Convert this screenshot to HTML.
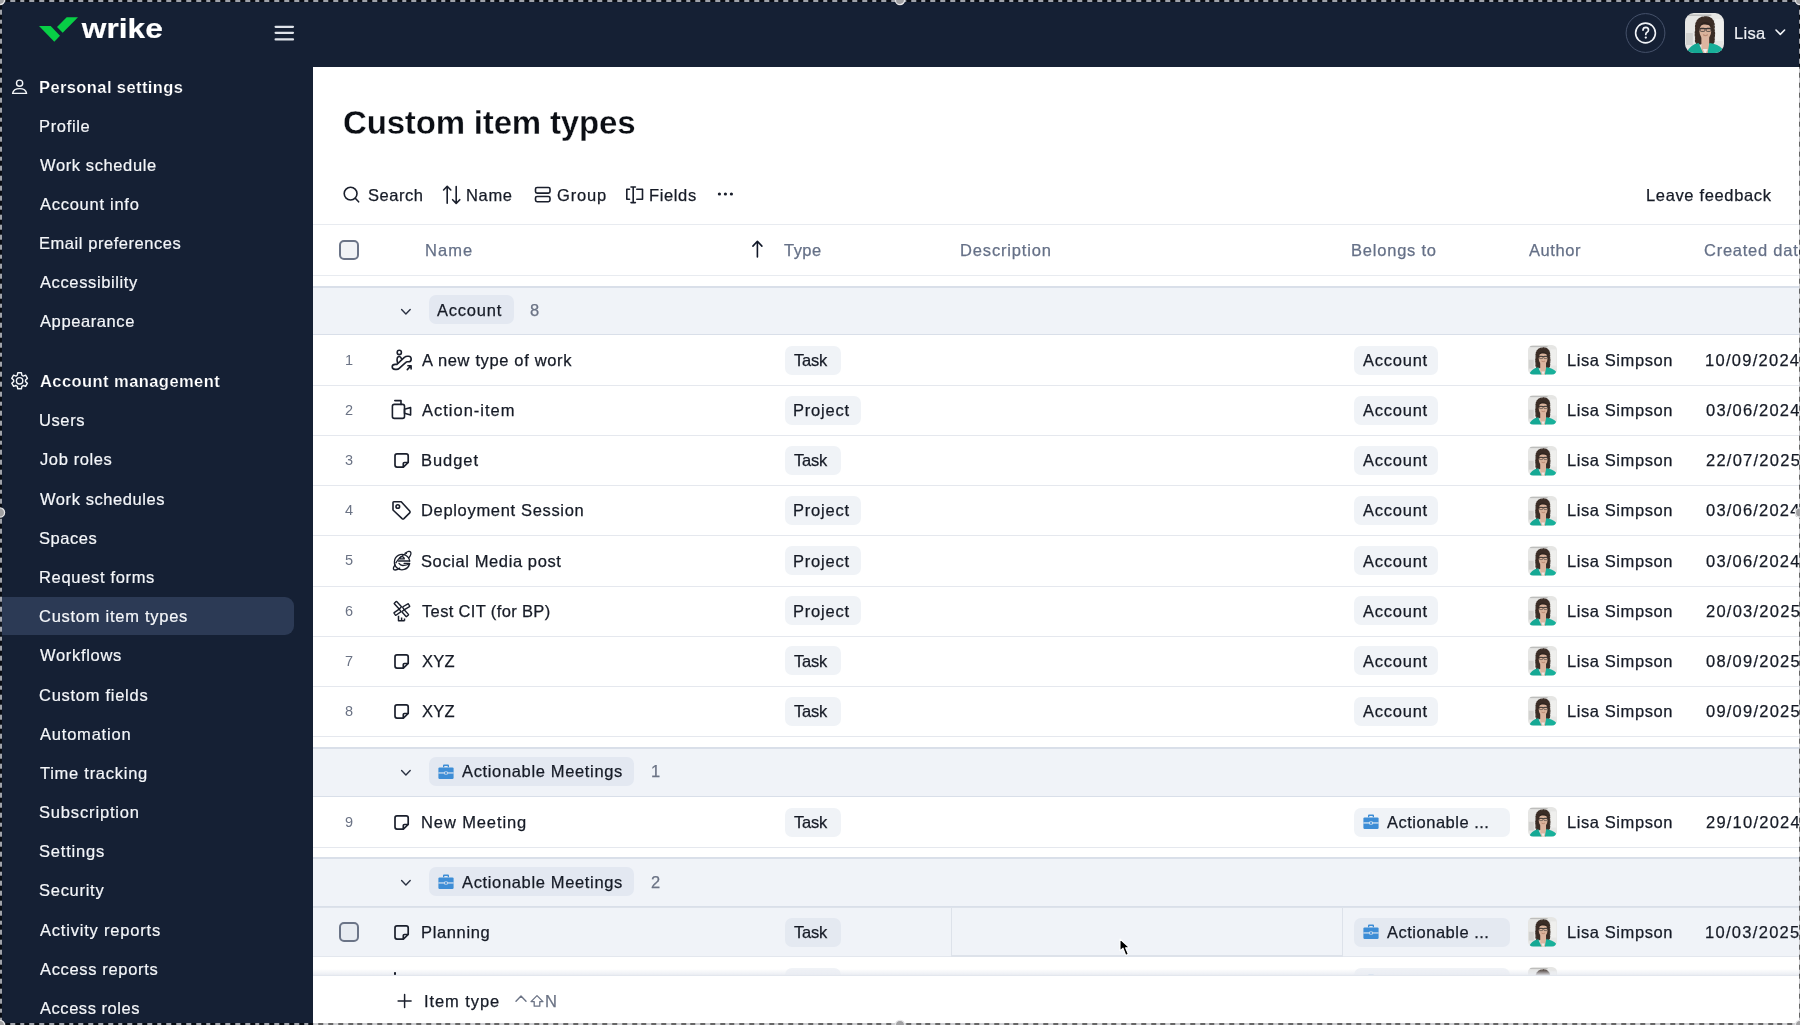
<!DOCTYPE html><html><head><meta charset="utf-8"><title>Custom item types</title><style>
*{box-sizing:border-box;margin:0;padding:0}
html,body{width:1800px;height:1025px;overflow:hidden;background:#152034;font-family:"Liberation Sans",sans-serif;}
.tx,.a{will-change:transform}
.a{position:absolute;white-space:nowrap}
.tx{-webkit-text-stroke:0.25px currentColor}
.sx{-webkit-text-stroke:0.2px currentColor}
.main{position:absolute;left:313px;top:67px;width:1487px;height:958px;background:#fff;overflow:hidden}
.hl{position:absolute;left:0;height:1px;background:#e5e8ee;width:1487px}
.chip{position:absolute;height:29px;border-radius:7px;background:#f0f3f7}
.gchip{position:absolute;height:29px;border-radius:7px;background:#e3e8f1}
.grp{position:absolute;left:0;width:1487px;background:#f0f3f8;border-top:2px solid #d9dfe9;border-bottom:1.5px solid #d9dfe9}
</style></head><body>
<svg class="a" style="left:0;top:0" width="300" height="67" viewBox="0 0 300 67"><polygon points="39,26 50.7,26.1 60,35.7 54.3,41.7" fill="#08cf46"/><polygon points="57,27 66.7,17.2 78,17.2 62.7,32.7" fill="#08cf46"/><g fill="#dfe3ea"><rect x="274.5" y="25.7" width="19.6" height="2.2" rx="1.1"/><rect x="274.5" y="31.7" width="19.6" height="2.2" rx="1.1"/><rect x="274.5" y="38.3" width="19.6" height="2.2" rx="1.1"/></g></svg>
<svg class="a" style="left:0;top:0" width="200" height="60" viewBox="0 0 200 60"><text transform="translate(81.8 38.4) scale(1.218 1.06)" font-family="Liberation Sans" font-weight="bold" font-size="26" fill="#fff" stroke="#fff" stroke-width="0.15">wrike</text></svg>
<svg class="a" style="left:1600px;top:0" width="200" height="67" viewBox="1600 0 200 67"><circle cx="1645.5" cy="33" r="19.4" fill="none" stroke="#46526b" stroke-width="1"/><circle cx="1645.5" cy="33" r="9.9" fill="none" stroke="#f2f4f8" stroke-width="1.6"/><path d="M1643 30.1 Q1643.2 27.4 1645.8 27.4 Q1648.5 27.5 1648.5 29.9 Q1648.5 31.5 1646.8 32.4 Q1645.8 33 1645.8 34.4" fill="none" stroke="#f2f4f8" stroke-width="1.7" stroke-linecap="round"/><circle cx="1645.8" cy="37.6" r="1.15" fill="#f2f4f8"/><path d="M1776 30 L1780.3 34.4 L1784.6 30" fill="none" stroke="#f2f4f8" stroke-width="1.6" stroke-linecap="round" stroke-linejoin="round"/></svg>
<svg class="a" style="left:1685px;top:13px" width="39" height="40" viewBox="0 0 40 40" preserveAspectRatio="none"><defs><clipPath id="chdr"><rect x="0" y="0" width="40" height="40" rx="9"/></clipPath></defs><g clip-path="url(#chdr)"><rect width="40" height="40" fill="#e6e6e4"/><rect x="3" y="1.5" width="24" height="1.4" fill="#8d8d8d" opacity="0.5"/><rect x="1" y="20" width="7" height="12" fill="#d2d2d0"/><rect x="31" y="6" width="8" height="22" fill="#efefed"/><path d="M20.5 4 Q25.6 3.6 28.2 7.2 Q30.4 11 29.6 16 Q30.6 21 29.6 25 Q30.4 29 28 31 L24 30.6 L17 30.6 L12.6 31 Q10.2 29 11.2 25 Q10.2 21 11.2 16.5 Q10.4 11 13 7.4 Q15.6 4.2 20.5 4Z" fill="#3a2c25" stroke="#3a2c25" stroke-width="1.6" stroke-dasharray="1.6 1.4" stroke-linecap="round"/><ellipse cx="20.8" cy="18.2" rx="6" ry="8.2" fill="#dab39c"/><path d="M15 13 Q17 8.5 21.5 9 Q25.5 9.5 27 13 Q23 11 19 11.5 Q16.5 12 15 13Z" fill="#2f241f"/><rect x="16.8" y="24" width="8" height="17" fill="#dcb5a0"/><path d="M15 15.6 H27.4" stroke="#3b3634" stroke-width="1.1"/><rect x="15.6" y="15.2" width="4.8" height="3.2" rx="1" fill="none" stroke="#3b3634" stroke-width="0.8"/><rect x="21.8" y="15.2" width="4.8" height="3.2" rx="1" fill="none" stroke="#3b3634" stroke-width="0.8"/><path d="M18.5 21.8 Q21 23.4 23.5 21.8" fill="none" stroke="#a8705a" stroke-width="0.8"/><path d="M1 41 Q4 32 14 30 L19 41Z" fill="#15a894"/><path d="M25 30 Q34 31 38.5 36 L37.5 41 L23 41Z" fill="#18b09a"/><path d="M18.2 36 L20.8 41 L23.2 36Z" fill="#ececec"/></g></svg>
<div class="a sx" style="left:1733.85px;top:22.90px;font-size:16.5px;line-height:20px;color:#eef0f4;letter-spacing:0.295px;">Lisa</div>
<svg class="a" style="left:0;top:60px" width="40" height="340" viewBox="0 60 40 340"><circle cx="19.6" cy="83.2" r="3.1" fill="none" stroke="#f4f6f9" stroke-width="1.4"/><path d="M12.6 93.4 Q13.5 88.6 19.6 88.6 Q25.7 88.6 26.6 93.4 Z" fill="none" stroke="#f4f6f9" stroke-width="1.4" stroke-linejoin="round"/></svg>
<svg class="a" style="left:0;top:360px" width="40" height="40" viewBox="0 360 40 40"><path d="M17.76 372.81 L21.44 372.81 L21.85 375.24 L23.29 376.07 L25.60 375.21 L27.44 378.40 L25.54 379.96 L25.54 381.64 L27.44 383.20 L25.60 386.39 L23.29 385.53 L21.85 386.36 L21.44 388.79 L17.76 388.79 L17.35 386.36 L15.91 385.53 L13.60 386.39 L11.76 383.20 L13.66 381.64 L13.66 379.96 L11.76 378.40 L13.60 375.21 L15.91 376.07 L17.35 375.24Z" fill="none" stroke="#f4f6f9" stroke-width="1.4" stroke-linejoin="round"/><circle cx="19.6" cy="380.8" r="3.2" fill="none" stroke="#f4f6f9" stroke-width="1.4"/></svg>
<div class="a" style="left:0;top:596.5px;width:294px;height:38px;background:#2c3a55;border-radius:0 9px 9px 0"></div>
<div class="a" style="left:38.50px;top:76.50px;font-size:16.5px;line-height:20px;font-weight:bold;color:#ffffff;letter-spacing:0.396px;-webkit-text-stroke:0.2px #152034">Personal settings</div>
<div class="a sx" style="left:38.75px;top:116.00px;font-size:16.5px;line-height:20px;color:#f4f6f9;letter-spacing:0.670px;">Profile</div>
<div class="a sx" style="left:40.03px;top:155.07px;font-size:16.5px;line-height:20px;color:#f4f6f9;letter-spacing:0.607px;">Work schedule</div>
<div class="a sx" style="left:40.07px;top:194.14px;font-size:16.5px;line-height:20px;color:#f4f6f9;letter-spacing:0.729px;">Account info</div>
<div class="a sx" style="left:38.75px;top:233.21px;font-size:16.5px;line-height:20px;color:#f4f6f9;letter-spacing:0.555px;">Email preferences</div>
<div class="a sx" style="left:40.07px;top:272.28px;font-size:16.5px;line-height:20px;color:#f4f6f9;letter-spacing:0.617px;">Accessibility</div>
<div class="a sx" style="left:40.07px;top:311.35px;font-size:16.5px;line-height:20px;color:#f4f6f9;letter-spacing:0.598px;">Appearance</div>
<div class="a" style="left:39.79px;top:370.50px;font-size:16.5px;line-height:20px;font-weight:bold;color:#ffffff;letter-spacing:0.432px;-webkit-text-stroke:0.2px #152034">Account management</div>
<div class="a sx" style="left:38.83px;top:410.20px;font-size:16.5px;line-height:20px;color:#f4f6f9;letter-spacing:0.596px;">Users</div>
<div class="a sx" style="left:39.84px;top:449.39px;font-size:16.5px;line-height:20px;color:#f4f6f9;letter-spacing:0.613px;">Job roles</div>
<div class="a sx" style="left:40.03px;top:488.58px;font-size:16.5px;line-height:20px;color:#f4f6f9;letter-spacing:0.569px;">Work schedules</div>
<div class="a sx" style="left:39.35px;top:527.77px;font-size:16.5px;line-height:20px;color:#f4f6f9;letter-spacing:0.562px;">Spaces</div>
<div class="a sx" style="left:38.75px;top:566.96px;font-size:16.5px;line-height:20px;color:#f4f6f9;letter-spacing:0.672px;">Request forms</div>
<div class="a sx" style="left:39.26px;top:606.15px;font-size:16.5px;line-height:20px;color:#f4f6f9;letter-spacing:0.732px;">Custom item types</div>
<div class="a sx" style="left:40.03px;top:645.34px;font-size:16.5px;line-height:20px;color:#f4f6f9;letter-spacing:0.685px;">Workflows</div>
<div class="a sx" style="left:39.26px;top:684.53px;font-size:16.5px;line-height:20px;color:#f4f6f9;letter-spacing:0.724px;">Custom fields</div>
<div class="a sx" style="left:40.07px;top:723.72px;font-size:16.5px;line-height:20px;color:#f4f6f9;letter-spacing:0.793px;">Automation</div>
<div class="a sx" style="left:39.73px;top:762.91px;font-size:16.5px;line-height:20px;color:#f4f6f9;letter-spacing:0.734px;">Time tracking</div>
<div class="a sx" style="left:39.35px;top:802.10px;font-size:16.5px;line-height:20px;color:#f4f6f9;letter-spacing:0.838px;">Subscription</div>
<div class="a sx" style="left:39.35px;top:841.29px;font-size:16.5px;line-height:20px;color:#f4f6f9;letter-spacing:0.804px;">Settings</div>
<div class="a sx" style="left:39.35px;top:880.48px;font-size:16.5px;line-height:20px;color:#f4f6f9;letter-spacing:0.725px;">Security</div>
<div class="a sx" style="left:40.07px;top:919.67px;font-size:16.5px;line-height:20px;color:#f4f6f9;letter-spacing:0.802px;">Activity reports</div>
<div class="a sx" style="left:40.07px;top:958.86px;font-size:16.5px;line-height:20px;color:#f4f6f9;letter-spacing:0.655px;">Access reports</div>
<div class="a sx" style="left:40.07px;top:998.05px;font-size:16.5px;line-height:20px;color:#f4f6f9;letter-spacing:0.545px;">Access roles</div>
<div class="main">
<div class="a" style="left:29.85px;top:35.60px;font-size:33px;line-height:40px;font-weight:bold;color:#0b0e14;letter-spacing:-0.170px;-webkit-text-stroke:0.3px #fff">Custom item types</div>
<svg class="a" style="left:22px;top:116px" width="420" height="24" viewBox="335 183 420 24"><g fill="none" stroke="#1a1f2c" stroke-width="1.6" stroke-linecap="round" stroke-linejoin="round"><circle cx="350.6" cy="193.6" r="6.4"/><path d="M355.3 198.3 L358.6 201.8"/><path d="M447.2 203.3 V186.5 M443.6 190 L447.2 186.3 L450.8 190"/><path d="M456.2 186.5 V203.3 M452.6 199.7 L456.2 203.4 L459.8 199.7"/><rect x="535.5" y="187.5" width="14.5" height="5.6" rx="1.6"/><rect x="535.5" y="196.5" width="14.5" height="5.2" rx="1.6"/><path d="M629.5 189.3 H626.8 V199.3 H629.5"/><path d="M636.8 189.3 H642.5 V199.3 H636.8"/><path d="M633.2 187 V202.6 M631 187 H635.4 M631 202.6 H635.4"/></g><g fill="#1a1f2c"><circle cx="719.4" cy="194" r="1.6"/><circle cx="725.4" cy="194" r="1.6"/><circle cx="731.4" cy="194" r="1.6"/></g></svg>
<div class="a tx" style="left:54.55px;top:117.80px;font-size:16.5px;line-height:20px;color:#161b26;letter-spacing:0.528px;">Search</div>
<div class="a tx" style="left:153.45px;top:117.80px;font-size:16.5px;line-height:20px;color:#161b26;letter-spacing:0.658px;">Name</div>
<div class="a tx" style="left:243.57px;top:117.80px;font-size:16.5px;line-height:20px;color:#161b26;letter-spacing:0.816px;">Group</div>
<div class="a tx" style="left:335.95px;top:117.80px;font-size:16.5px;line-height:20px;color:#161b26;letter-spacing:0.627px;">Fields</div>
<div class="a tx" style="left:1332.65px;top:117.80px;font-size:16.5px;line-height:20px;color:#161b26;letter-spacing:0.648px;">Leave feedback</div>
<div class="hl" style="top:157px;background:#e8ebf0"></div>
<div class="hl" style="top:207.5px;background:#e8ebf0"></div>
<div class="a" style="left:26.19999999999999px;top:173px;width:19.5px;height:19.5px;border:2px solid #6b7487;border-radius:5px;background:#f1f3f6"></div>
<div class="a tx" style="left:112.35px;top:172.90px;font-size:16.5px;line-height:20px;color:#657087;letter-spacing:1.024px;">Name</div>
<div class="a tx" style="left:471.03px;top:172.90px;font-size:16.5px;line-height:20px;color:#657087;letter-spacing:0.474px;">Type</div>
<div class="a tx" style="left:646.55px;top:172.90px;font-size:16.5px;line-height:20px;color:#657087;letter-spacing:0.849px;">Description</div>
<div class="a tx" style="left:1037.95px;top:172.90px;font-size:16.5px;line-height:20px;color:#657087;letter-spacing:0.786px;">Belongs to</div>
<div class="a tx" style="left:1216.07px;top:172.90px;font-size:16.5px;line-height:20px;color:#657087;letter-spacing:0.558px;">Author</div>
<div class="a tx" style="left:1391.16px;top:172.90px;font-size:16.5px;line-height:20px;color:#657087;letter-spacing:0.750px;">Created date</div>
<svg class="a" style="left:434px;top:171px" width="20" height="24" viewBox="747 238 20 24"><path d="M757.4 257 V241.5 M752.9 246.1 L757.4 241.3 L761.9 246.1" fill="none" stroke="#0f1627" stroke-width="1.6" stroke-linecap="round" stroke-linejoin="round"/></svg>
<div class="grp" style="top:218.5px;height:49.5px"></div><svg class="a" style="left:86.3px;top:239.6px" width="14" height="10" viewBox="0 0 14 10"><path d="M2.6 2.4 L6.9 6.9 L11.2 2.4" fill="none" stroke="#2a3142" stroke-width="1.4" stroke-linecap="round" stroke-linejoin="round"/></svg><div class="gchip" style="left:116.0px;top:228.0px;width:84.5px"></div><div class="a tx" style="left:123.67px;top:232.80px;font-size:16.5px;line-height:20px;color:#161b26;letter-spacing:0.772px;">Account</div><div class="a tx" style="left:217.08px;top:232.80px;font-size:16.5px;line-height:20px;color:#6b7385;letter-spacing:0.650px;">8</div>
<div class="a" style="left:25.6px;top:282.8px;width:20px;text-align:center;font-size:14.5px;line-height:20px;color:#6b7385">1</div><svg class="a" style="left:72.0px;top:278.0px" width="35" height="30" viewBox="0 0 35 30"><g fill="none" stroke="#1a1f2c" stroke-width="1.6" stroke-linecap="round" stroke-linejoin="round"><circle cx="14.3" cy="7.4" r="2.1"/><path d="M12.6 18.2 Q11.6 14.5 12.3 12.8 Q13.2 11.2 14.6 11.4 Q15.7 11.7 16.6 13.9"/><path d="M10.2 19.4 H11.9 L19.6 12.2 Q20.6 11.2 22.4 11.2 H23.6 Q26.2 11.3 26.2 14.1 Q26.1 16.7 23.6 16.8 H22.3 Q21.4 16.8 20.6 17.6 L14.2 23.4 Q13.2 24.4 11.6 24.4 H10.2 Q7.2 24.3 7.2 21.8 Q7.3 19.5 10.2 19.4Z"/><path d="M22.3 24.6 L26 20.8 M22.9 20.7 H26.1 V23.9"/></g></svg><div class="a tx" style="left:108.87px;top:283.00px;font-size:16.5px;line-height:20px;color:#161b26;letter-spacing:0.642px;">A new type of work</div><div class="chip" style="left:472.0px;top:278.5px;width:56px"></div><div class="a tx" style="left:481.03px;top:283.00px;font-size:16.5px;line-height:20px;color:#161b26;letter-spacing:-0.236px;">Task</div><div class="chip" style="left:1040.5px;top:278.5px;width:84px"></div><div class="a tx" style="left:1049.57px;top:283.00px;font-size:16.5px;line-height:20px;color:#161b26;letter-spacing:0.756px;">Account</div><svg class="a" style="left:1215.1px;top:278.3px" width="29.1" height="29.5" viewBox="0 0 40 40" preserveAspectRatio="none"><defs><clipPath id="cr1"><rect x="0" y="0" width="40" height="40" rx="7"/></clipPath></defs><g clip-path="url(#cr1)"><rect width="40" height="40" fill="#e6e6e4"/><rect x="3" y="1.5" width="24" height="1.4" fill="#8d8d8d" opacity="0.5"/><rect x="1" y="20" width="7" height="12" fill="#d2d2d0"/><rect x="31" y="6" width="8" height="22" fill="#efefed"/><path d="M20.5 4 Q25.6 3.6 28.2 7.2 Q30.4 11 29.6 16 Q30.6 21 29.6 25 Q30.4 29 28 31 L24 30.6 L17 30.6 L12.6 31 Q10.2 29 11.2 25 Q10.2 21 11.2 16.5 Q10.4 11 13 7.4 Q15.6 4.2 20.5 4Z" fill="#3a2c25" stroke="#3a2c25" stroke-width="1.6" stroke-dasharray="1.6 1.4" stroke-linecap="round"/><ellipse cx="20.8" cy="18.2" rx="6" ry="8.2" fill="#dab39c"/><path d="M15 13 Q17 8.5 21.5 9 Q25.5 9.5 27 13 Q23 11 19 11.5 Q16.5 12 15 13Z" fill="#2f241f"/><rect x="16.8" y="24" width="8" height="17" fill="#dcb5a0"/><path d="M15 15.6 H27.4" stroke="#3b3634" stroke-width="1.1"/><rect x="15.6" y="15.2" width="4.8" height="3.2" rx="1" fill="none" stroke="#3b3634" stroke-width="0.8"/><rect x="21.8" y="15.2" width="4.8" height="3.2" rx="1" fill="none" stroke="#3b3634" stroke-width="0.8"/><path d="M18.5 21.8 Q21 23.4 23.5 21.8" fill="none" stroke="#a8705a" stroke-width="0.8"/><path d="M1 41 Q4 32 14 30 L19 41Z" fill="#15a894"/><path d="M25 30 Q34 31 38.5 36 L37.5 41 L23 41Z" fill="#18b09a"/><path d="M18.2 36 L20.8 41 L23.2 36Z" fill="#ececec"/></g></svg><div class="a tx" style="left:1253.95px;top:283.00px;font-size:16.5px;line-height:20px;color:#161b26;letter-spacing:0.580px;">Lisa Simpson</div><div class="a tx" style="left:1392.44px;top:283.00px;font-size:16.5px;line-height:20px;color:#161b26;letter-spacing:1.273px;">10/09/2024</div><div class="hl" style="top:318.0px"></div>
<div class="a" style="left:25.6px;top:332.9px;width:20px;text-align:center;font-size:14.5px;line-height:20px;color:#6b7385">2</div><svg class="a" style="left:72.0px;top:328.1px" width="35" height="30" viewBox="0 0 35 30"><g fill="none" stroke="#1a1f2c" stroke-width="1.6" stroke-linecap="round" stroke-linejoin="round"><rect x="7.4" y="9.4" width="12.1" height="14" rx="1.9"/><path d="M9.8 5.6 H16 V9.4"/><path d="M19.5 14.3 L25.6 12.6 V20.1 L19.5 18.3Z"/></g></svg><div class="a tx" style="left:108.87px;top:333.14px;font-size:16.5px;line-height:20px;color:#161b26;letter-spacing:1.000px;">Action-item</div><div class="chip" style="left:472.0px;top:328.6px;width:76px"></div><div class="a tx" style="left:480.05px;top:333.14px;font-size:16.5px;line-height:20px;color:#161b26;letter-spacing:0.787px;">Project</div><div class="chip" style="left:1040.5px;top:328.6px;width:84px"></div><div class="a tx" style="left:1049.57px;top:333.14px;font-size:16.5px;line-height:20px;color:#161b26;letter-spacing:0.756px;">Account</div><svg class="a" style="left:1215.1px;top:328.44px" width="29.1" height="29.5" viewBox="0 0 40 40" preserveAspectRatio="none"><defs><clipPath id="cr2"><rect x="0" y="0" width="40" height="40" rx="7"/></clipPath></defs><g clip-path="url(#cr2)"><rect width="40" height="40" fill="#e6e6e4"/><rect x="3" y="1.5" width="24" height="1.4" fill="#8d8d8d" opacity="0.5"/><rect x="1" y="20" width="7" height="12" fill="#d2d2d0"/><rect x="31" y="6" width="8" height="22" fill="#efefed"/><path d="M20.5 4 Q25.6 3.6 28.2 7.2 Q30.4 11 29.6 16 Q30.6 21 29.6 25 Q30.4 29 28 31 L24 30.6 L17 30.6 L12.6 31 Q10.2 29 11.2 25 Q10.2 21 11.2 16.5 Q10.4 11 13 7.4 Q15.6 4.2 20.5 4Z" fill="#3a2c25" stroke="#3a2c25" stroke-width="1.6" stroke-dasharray="1.6 1.4" stroke-linecap="round"/><ellipse cx="20.8" cy="18.2" rx="6" ry="8.2" fill="#dab39c"/><path d="M15 13 Q17 8.5 21.5 9 Q25.5 9.5 27 13 Q23 11 19 11.5 Q16.5 12 15 13Z" fill="#2f241f"/><rect x="16.8" y="24" width="8" height="17" fill="#dcb5a0"/><path d="M15 15.6 H27.4" stroke="#3b3634" stroke-width="1.1"/><rect x="15.6" y="15.2" width="4.8" height="3.2" rx="1" fill="none" stroke="#3b3634" stroke-width="0.8"/><rect x="21.8" y="15.2" width="4.8" height="3.2" rx="1" fill="none" stroke="#3b3634" stroke-width="0.8"/><path d="M18.5 21.8 Q21 23.4 23.5 21.8" fill="none" stroke="#a8705a" stroke-width="0.8"/><path d="M1 41 Q4 32 14 30 L19 41Z" fill="#15a894"/><path d="M25 30 Q34 31 38.5 36 L37.5 41 L23 41Z" fill="#18b09a"/><path d="M18.2 36 L20.8 41 L23.2 36Z" fill="#ececec"/></g></svg><div class="a tx" style="left:1253.95px;top:333.14px;font-size:16.5px;line-height:20px;color:#161b26;letter-spacing:0.580px;">Lisa Simpson</div><div class="a tx" style="left:1393.06px;top:333.14px;font-size:16.5px;line-height:20px;color:#161b26;letter-spacing:1.205px;">03/06/2024</div><div class="hl" style="top:368.1px"></div>
<div class="a" style="left:25.6px;top:383.1px;width:20px;text-align:center;font-size:14.5px;line-height:20px;color:#6b7385">3</div><svg class="a" style="left:72.0px;top:378.3px" width="35" height="30" viewBox="0 0 35 30"><g fill="none" stroke="#1a1f2c" stroke-width="1.6" stroke-linecap="round" stroke-linejoin="round"><path d="M12 8.9 H21.2 Q23.2 8.9 23.2 10.9 V17.5 L18.4 22.1 H12 Q10 22.1 10 20.1 V10.9 Q10 8.9 12 8.9Z M23.2 17.5 H19.4 Q18.3 17.5 18.3 18.6 V22.1" stroke-width="1.7"/></g></svg><div class="a tx" style="left:107.55px;top:383.28px;font-size:16.5px;line-height:20px;color:#161b26;letter-spacing:0.936px;">Budget</div><div class="chip" style="left:472.0px;top:378.8px;width:56px"></div><div class="a tx" style="left:481.03px;top:383.28px;font-size:16.5px;line-height:20px;color:#161b26;letter-spacing:-0.236px;">Task</div><div class="chip" style="left:1040.5px;top:378.8px;width:84px"></div><div class="a tx" style="left:1049.57px;top:383.28px;font-size:16.5px;line-height:20px;color:#161b26;letter-spacing:0.756px;">Account</div><svg class="a" style="left:1215.1px;top:378.58px" width="29.1" height="29.5" viewBox="0 0 40 40" preserveAspectRatio="none"><defs><clipPath id="cr3"><rect x="0" y="0" width="40" height="40" rx="7"/></clipPath></defs><g clip-path="url(#cr3)"><rect width="40" height="40" fill="#e6e6e4"/><rect x="3" y="1.5" width="24" height="1.4" fill="#8d8d8d" opacity="0.5"/><rect x="1" y="20" width="7" height="12" fill="#d2d2d0"/><rect x="31" y="6" width="8" height="22" fill="#efefed"/><path d="M20.5 4 Q25.6 3.6 28.2 7.2 Q30.4 11 29.6 16 Q30.6 21 29.6 25 Q30.4 29 28 31 L24 30.6 L17 30.6 L12.6 31 Q10.2 29 11.2 25 Q10.2 21 11.2 16.5 Q10.4 11 13 7.4 Q15.6 4.2 20.5 4Z" fill="#3a2c25" stroke="#3a2c25" stroke-width="1.6" stroke-dasharray="1.6 1.4" stroke-linecap="round"/><ellipse cx="20.8" cy="18.2" rx="6" ry="8.2" fill="#dab39c"/><path d="M15 13 Q17 8.5 21.5 9 Q25.5 9.5 27 13 Q23 11 19 11.5 Q16.5 12 15 13Z" fill="#2f241f"/><rect x="16.8" y="24" width="8" height="17" fill="#dcb5a0"/><path d="M15 15.6 H27.4" stroke="#3b3634" stroke-width="1.1"/><rect x="15.6" y="15.2" width="4.8" height="3.2" rx="1" fill="none" stroke="#3b3634" stroke-width="0.8"/><rect x="21.8" y="15.2" width="4.8" height="3.2" rx="1" fill="none" stroke="#3b3634" stroke-width="0.8"/><path d="M18.5 21.8 Q21 23.4 23.5 21.8" fill="none" stroke="#a8705a" stroke-width="0.8"/><path d="M1 41 Q4 32 14 30 L19 41Z" fill="#15a894"/><path d="M25 30 Q34 31 38.5 36 L37.5 41 L23 41Z" fill="#18b09a"/><path d="M18.2 36 L20.8 41 L23.2 36Z" fill="#ececec"/></g></svg><div class="a tx" style="left:1253.95px;top:383.28px;font-size:16.5px;line-height:20px;color:#161b26;letter-spacing:0.580px;">Lisa Simpson</div><div class="a tx" style="left:1392.87px;top:383.28px;font-size:16.5px;line-height:20px;color:#161b26;letter-spacing:1.249px;">22/07/2025</div><div class="hl" style="top:418.3px"></div>
<div class="a" style="left:25.6px;top:433.2px;width:20px;text-align:center;font-size:14.5px;line-height:20px;color:#6b7385">4</div><svg class="a" style="left:72.0px;top:428.4px" width="35" height="30" viewBox="0 0 35 30"><g fill="none" stroke="#1a1f2c" stroke-width="1.6" stroke-linecap="round" stroke-linejoin="round"><path d="M8 7.6 Q8 6.8 8.8 6.8 H16.2 L24.7 16 Q25.6 17 24.7 17.9 L18.9 23.6 Q18 24.4 17.1 23.6 L8 15 Z"/><circle cx="12.8" cy="11.5" r="1.8"/></g></svg><div class="a tx" style="left:107.55px;top:433.42px;font-size:16.5px;line-height:20px;color:#161b26;letter-spacing:0.670px;">Deployment Session</div><div class="chip" style="left:472.0px;top:428.9px;width:76px"></div><div class="a tx" style="left:480.05px;top:433.42px;font-size:16.5px;line-height:20px;color:#161b26;letter-spacing:0.787px;">Project</div><div class="chip" style="left:1040.5px;top:428.9px;width:84px"></div><div class="a tx" style="left:1049.57px;top:433.42px;font-size:16.5px;line-height:20px;color:#161b26;letter-spacing:0.756px;">Account</div><svg class="a" style="left:1215.1px;top:428.71999999999997px" width="29.1" height="29.5" viewBox="0 0 40 40" preserveAspectRatio="none"><defs><clipPath id="cr4"><rect x="0" y="0" width="40" height="40" rx="7"/></clipPath></defs><g clip-path="url(#cr4)"><rect width="40" height="40" fill="#e6e6e4"/><rect x="3" y="1.5" width="24" height="1.4" fill="#8d8d8d" opacity="0.5"/><rect x="1" y="20" width="7" height="12" fill="#d2d2d0"/><rect x="31" y="6" width="8" height="22" fill="#efefed"/><path d="M20.5 4 Q25.6 3.6 28.2 7.2 Q30.4 11 29.6 16 Q30.6 21 29.6 25 Q30.4 29 28 31 L24 30.6 L17 30.6 L12.6 31 Q10.2 29 11.2 25 Q10.2 21 11.2 16.5 Q10.4 11 13 7.4 Q15.6 4.2 20.5 4Z" fill="#3a2c25" stroke="#3a2c25" stroke-width="1.6" stroke-dasharray="1.6 1.4" stroke-linecap="round"/><ellipse cx="20.8" cy="18.2" rx="6" ry="8.2" fill="#dab39c"/><path d="M15 13 Q17 8.5 21.5 9 Q25.5 9.5 27 13 Q23 11 19 11.5 Q16.5 12 15 13Z" fill="#2f241f"/><rect x="16.8" y="24" width="8" height="17" fill="#dcb5a0"/><path d="M15 15.6 H27.4" stroke="#3b3634" stroke-width="1.1"/><rect x="15.6" y="15.2" width="4.8" height="3.2" rx="1" fill="none" stroke="#3b3634" stroke-width="0.8"/><rect x="21.8" y="15.2" width="4.8" height="3.2" rx="1" fill="none" stroke="#3b3634" stroke-width="0.8"/><path d="M18.5 21.8 Q21 23.4 23.5 21.8" fill="none" stroke="#a8705a" stroke-width="0.8"/><path d="M1 41 Q4 32 14 30 L19 41Z" fill="#15a894"/><path d="M25 30 Q34 31 38.5 36 L37.5 41 L23 41Z" fill="#18b09a"/><path d="M18.2 36 L20.8 41 L23.2 36Z" fill="#ececec"/></g></svg><div class="a tx" style="left:1253.95px;top:433.42px;font-size:16.5px;line-height:20px;color:#161b26;letter-spacing:0.580px;">Lisa Simpson</div><div class="a tx" style="left:1393.06px;top:433.42px;font-size:16.5px;line-height:20px;color:#161b26;letter-spacing:1.205px;">03/06/2024</div><div class="hl" style="top:468.4px"></div>
<div class="a" style="left:25.6px;top:483.4px;width:20px;text-align:center;font-size:14.5px;line-height:20px;color:#6b7385">5</div><svg class="a" style="left:72.0px;top:478.6px" width="35" height="30" viewBox="0 0 35 30"><g fill="none" stroke="#1a1f2c" stroke-width="1.6" stroke-linecap="round" stroke-linejoin="round"><g stroke-width="1.35" transform="translate(16.7 15) scale(0.96) translate(-16.7 -15.6)"><path d="M25 15.6 A8 8 0 1 0 24.7 19.2"/><path d="M13.4 15.6 H25 M19.2 18.1 H25"/><path d="M14.6 13.4 Q15 11 17 11 Q19 11 19.4 13.4 Z"/><path d="M13.9 18.1 Q15.4 20.4 18 20.3 Q21.6 20.1 24.9 18.7"/><path d="M20.2 7.6 Q24.8 4.2 26 6.4 Q27.2 8.6 24.2 12.2 M9.8 19.6 Q7 23.6 8.6 24.6 Q10.4 25.8 14.6 23" /><path d="M10.6 17.6 Q14.6 10.6 21.6 7.8"/></g></g></svg><div class="a tx" style="left:108.15px;top:483.56px;font-size:16.5px;line-height:20px;color:#161b26;letter-spacing:0.602px;">Social Media post</div><div class="chip" style="left:472.0px;top:479.1px;width:76px"></div><div class="a tx" style="left:480.05px;top:483.56px;font-size:16.5px;line-height:20px;color:#161b26;letter-spacing:0.787px;">Project</div><div class="chip" style="left:1040.5px;top:479.1px;width:84px"></div><div class="a tx" style="left:1049.57px;top:483.56px;font-size:16.5px;line-height:20px;color:#161b26;letter-spacing:0.756px;">Account</div><svg class="a" style="left:1215.1px;top:478.8599999999999px" width="29.1" height="29.5" viewBox="0 0 40 40" preserveAspectRatio="none"><defs><clipPath id="cr5"><rect x="0" y="0" width="40" height="40" rx="7"/></clipPath></defs><g clip-path="url(#cr5)"><rect width="40" height="40" fill="#e6e6e4"/><rect x="3" y="1.5" width="24" height="1.4" fill="#8d8d8d" opacity="0.5"/><rect x="1" y="20" width="7" height="12" fill="#d2d2d0"/><rect x="31" y="6" width="8" height="22" fill="#efefed"/><path d="M20.5 4 Q25.6 3.6 28.2 7.2 Q30.4 11 29.6 16 Q30.6 21 29.6 25 Q30.4 29 28 31 L24 30.6 L17 30.6 L12.6 31 Q10.2 29 11.2 25 Q10.2 21 11.2 16.5 Q10.4 11 13 7.4 Q15.6 4.2 20.5 4Z" fill="#3a2c25" stroke="#3a2c25" stroke-width="1.6" stroke-dasharray="1.6 1.4" stroke-linecap="round"/><ellipse cx="20.8" cy="18.2" rx="6" ry="8.2" fill="#dab39c"/><path d="M15 13 Q17 8.5 21.5 9 Q25.5 9.5 27 13 Q23 11 19 11.5 Q16.5 12 15 13Z" fill="#2f241f"/><rect x="16.8" y="24" width="8" height="17" fill="#dcb5a0"/><path d="M15 15.6 H27.4" stroke="#3b3634" stroke-width="1.1"/><rect x="15.6" y="15.2" width="4.8" height="3.2" rx="1" fill="none" stroke="#3b3634" stroke-width="0.8"/><rect x="21.8" y="15.2" width="4.8" height="3.2" rx="1" fill="none" stroke="#3b3634" stroke-width="0.8"/><path d="M18.5 21.8 Q21 23.4 23.5 21.8" fill="none" stroke="#a8705a" stroke-width="0.8"/><path d="M1 41 Q4 32 14 30 L19 41Z" fill="#15a894"/><path d="M25 30 Q34 31 38.5 36 L37.5 41 L23 41Z" fill="#18b09a"/><path d="M18.2 36 L20.8 41 L23.2 36Z" fill="#ececec"/></g></svg><div class="a tx" style="left:1253.95px;top:483.56px;font-size:16.5px;line-height:20px;color:#161b26;letter-spacing:0.580px;">Lisa Simpson</div><div class="a tx" style="left:1393.06px;top:483.56px;font-size:16.5px;line-height:20px;color:#161b26;letter-spacing:1.205px;">03/06/2024</div><div class="hl" style="top:518.6px"></div>
<div class="a" style="left:25.6px;top:533.5px;width:20px;text-align:center;font-size:14.5px;line-height:20px;color:#6b7385">6</div><svg class="a" style="left:72.0px;top:528.7px" width="35" height="30" viewBox="0 0 35 30"><g fill="none" stroke="#1a1f2c" stroke-width="1.4" stroke-linejoin="round"><g transform="translate(16.7 13.3) rotate(-133)"><rect x="1.9" y="-1.6" width="7.6" height="3.2" rx="0.4"/></g><g transform="translate(16.7 13.3) rotate(-30)"><rect x="1.9" y="-1.6" width="6.6" height="3.2" rx="0.4"/></g><g transform="translate(16.7 13.3) rotate(145)"><rect x="1.9" y="-1.6" width="6.6" height="3.2" rx="0.4"/></g><g transform="translate(16.7 13.3) rotate(48)"><rect x="1.9" y="-1.6" width="6.8" height="3.2" rx="0.4"/></g><path d="M13.5 19.7 V24.8 H19.6 M16.6 21.6 V24.8 M19.5 22.6 V24.8" stroke-linecap="butt" stroke-width="1.5"/></g></svg><div class="a tx" style="left:108.53px;top:533.70px;font-size:16.5px;line-height:20px;color:#161b26;letter-spacing:0.351px;">Test CIT (for BP)</div><div class="chip" style="left:472.0px;top:529.2px;width:76px"></div><div class="a tx" style="left:480.05px;top:533.70px;font-size:16.5px;line-height:20px;color:#161b26;letter-spacing:0.787px;">Project</div><div class="chip" style="left:1040.5px;top:529.2px;width:84px"></div><div class="a tx" style="left:1049.57px;top:533.70px;font-size:16.5px;line-height:20px;color:#161b26;letter-spacing:0.756px;">Account</div><svg class="a" style="left:1215.1px;top:528.9999999999999px" width="29.1" height="29.5" viewBox="0 0 40 40" preserveAspectRatio="none"><defs><clipPath id="cr6"><rect x="0" y="0" width="40" height="40" rx="7"/></clipPath></defs><g clip-path="url(#cr6)"><rect width="40" height="40" fill="#e6e6e4"/><rect x="3" y="1.5" width="24" height="1.4" fill="#8d8d8d" opacity="0.5"/><rect x="1" y="20" width="7" height="12" fill="#d2d2d0"/><rect x="31" y="6" width="8" height="22" fill="#efefed"/><path d="M20.5 4 Q25.6 3.6 28.2 7.2 Q30.4 11 29.6 16 Q30.6 21 29.6 25 Q30.4 29 28 31 L24 30.6 L17 30.6 L12.6 31 Q10.2 29 11.2 25 Q10.2 21 11.2 16.5 Q10.4 11 13 7.4 Q15.6 4.2 20.5 4Z" fill="#3a2c25" stroke="#3a2c25" stroke-width="1.6" stroke-dasharray="1.6 1.4" stroke-linecap="round"/><ellipse cx="20.8" cy="18.2" rx="6" ry="8.2" fill="#dab39c"/><path d="M15 13 Q17 8.5 21.5 9 Q25.5 9.5 27 13 Q23 11 19 11.5 Q16.5 12 15 13Z" fill="#2f241f"/><rect x="16.8" y="24" width="8" height="17" fill="#dcb5a0"/><path d="M15 15.6 H27.4" stroke="#3b3634" stroke-width="1.1"/><rect x="15.6" y="15.2" width="4.8" height="3.2" rx="1" fill="none" stroke="#3b3634" stroke-width="0.8"/><rect x="21.8" y="15.2" width="4.8" height="3.2" rx="1" fill="none" stroke="#3b3634" stroke-width="0.8"/><path d="M18.5 21.8 Q21 23.4 23.5 21.8" fill="none" stroke="#a8705a" stroke-width="0.8"/><path d="M1 41 Q4 32 14 30 L19 41Z" fill="#15a894"/><path d="M25 30 Q34 31 38.5 36 L37.5 41 L23 41Z" fill="#18b09a"/><path d="M18.2 36 L20.8 41 L23.2 36Z" fill="#ececec"/></g></svg><div class="a tx" style="left:1253.95px;top:533.70px;font-size:16.5px;line-height:20px;color:#161b26;letter-spacing:0.580px;">Lisa Simpson</div><div class="a tx" style="left:1392.87px;top:533.70px;font-size:16.5px;line-height:20px;color:#161b26;letter-spacing:1.249px;">20/03/2025</div><div class="hl" style="top:568.7px"></div>
<div class="a" style="left:25.6px;top:583.6px;width:20px;text-align:center;font-size:14.5px;line-height:20px;color:#6b7385">7</div><svg class="a" style="left:72.0px;top:578.8px" width="35" height="30" viewBox="0 0 35 30"><g fill="none" stroke="#1a1f2c" stroke-width="1.6" stroke-linecap="round" stroke-linejoin="round"><path d="M12 8.9 H21.2 Q23.2 8.9 23.2 10.9 V17.5 L18.4 22.1 H12 Q10 22.1 10 20.1 V10.9 Q10 8.9 12 8.9Z M23.2 17.5 H19.4 Q18.3 17.5 18.3 18.6 V22.1" stroke-width="1.7"/></g></svg><div class="a tx" style="left:108.53px;top:583.84px;font-size:16.5px;line-height:20px;color:#161b26;letter-spacing:0.248px;">XYZ</div><div class="chip" style="left:472.0px;top:579.3px;width:56px"></div><div class="a tx" style="left:481.03px;top:583.84px;font-size:16.5px;line-height:20px;color:#161b26;letter-spacing:-0.236px;">Task</div><div class="chip" style="left:1040.5px;top:579.3px;width:84px"></div><div class="a tx" style="left:1049.57px;top:583.84px;font-size:16.5px;line-height:20px;color:#161b26;letter-spacing:0.756px;">Account</div><svg class="a" style="left:1215.1px;top:579.1399999999999px" width="29.1" height="29.5" viewBox="0 0 40 40" preserveAspectRatio="none"><defs><clipPath id="cr7"><rect x="0" y="0" width="40" height="40" rx="7"/></clipPath></defs><g clip-path="url(#cr7)"><rect width="40" height="40" fill="#e6e6e4"/><rect x="3" y="1.5" width="24" height="1.4" fill="#8d8d8d" opacity="0.5"/><rect x="1" y="20" width="7" height="12" fill="#d2d2d0"/><rect x="31" y="6" width="8" height="22" fill="#efefed"/><path d="M20.5 4 Q25.6 3.6 28.2 7.2 Q30.4 11 29.6 16 Q30.6 21 29.6 25 Q30.4 29 28 31 L24 30.6 L17 30.6 L12.6 31 Q10.2 29 11.2 25 Q10.2 21 11.2 16.5 Q10.4 11 13 7.4 Q15.6 4.2 20.5 4Z" fill="#3a2c25" stroke="#3a2c25" stroke-width="1.6" stroke-dasharray="1.6 1.4" stroke-linecap="round"/><ellipse cx="20.8" cy="18.2" rx="6" ry="8.2" fill="#dab39c"/><path d="M15 13 Q17 8.5 21.5 9 Q25.5 9.5 27 13 Q23 11 19 11.5 Q16.5 12 15 13Z" fill="#2f241f"/><rect x="16.8" y="24" width="8" height="17" fill="#dcb5a0"/><path d="M15 15.6 H27.4" stroke="#3b3634" stroke-width="1.1"/><rect x="15.6" y="15.2" width="4.8" height="3.2" rx="1" fill="none" stroke="#3b3634" stroke-width="0.8"/><rect x="21.8" y="15.2" width="4.8" height="3.2" rx="1" fill="none" stroke="#3b3634" stroke-width="0.8"/><path d="M18.5 21.8 Q21 23.4 23.5 21.8" fill="none" stroke="#a8705a" stroke-width="0.8"/><path d="M1 41 Q4 32 14 30 L19 41Z" fill="#15a894"/><path d="M25 30 Q34 31 38.5 36 L37.5 41 L23 41Z" fill="#18b09a"/><path d="M18.2 36 L20.8 41 L23.2 36Z" fill="#ececec"/></g></svg><div class="a tx" style="left:1253.95px;top:583.84px;font-size:16.5px;line-height:20px;color:#161b26;letter-spacing:0.580px;">Lisa Simpson</div><div class="a tx" style="left:1393.06px;top:583.84px;font-size:16.5px;line-height:20px;color:#161b26;letter-spacing:1.229px;">08/09/2025</div><div class="hl" style="top:618.8px"></div>
<div class="a" style="left:25.6px;top:633.8px;width:20px;text-align:center;font-size:14.5px;line-height:20px;color:#6b7385">8</div><svg class="a" style="left:72.0px;top:629.0px" width="35" height="30" viewBox="0 0 35 30"><g fill="none" stroke="#1a1f2c" stroke-width="1.6" stroke-linecap="round" stroke-linejoin="round"><path d="M12 8.9 H21.2 Q23.2 8.9 23.2 10.9 V17.5 L18.4 22.1 H12 Q10 22.1 10 20.1 V10.9 Q10 8.9 12 8.9Z M23.2 17.5 H19.4 Q18.3 17.5 18.3 18.6 V22.1" stroke-width="1.7"/></g></svg><div class="a tx" style="left:108.53px;top:633.98px;font-size:16.5px;line-height:20px;color:#161b26;letter-spacing:0.248px;">XYZ</div><div class="chip" style="left:472.0px;top:629.5px;width:56px"></div><div class="a tx" style="left:481.03px;top:633.98px;font-size:16.5px;line-height:20px;color:#161b26;letter-spacing:-0.236px;">Task</div><div class="chip" style="left:1040.5px;top:629.5px;width:84px"></div><div class="a tx" style="left:1049.57px;top:633.98px;font-size:16.5px;line-height:20px;color:#161b26;letter-spacing:0.756px;">Account</div><svg class="a" style="left:1215.1px;top:629.2799999999999px" width="29.1" height="29.5" viewBox="0 0 40 40" preserveAspectRatio="none"><defs><clipPath id="cr8"><rect x="0" y="0" width="40" height="40" rx="7"/></clipPath></defs><g clip-path="url(#cr8)"><rect width="40" height="40" fill="#e6e6e4"/><rect x="3" y="1.5" width="24" height="1.4" fill="#8d8d8d" opacity="0.5"/><rect x="1" y="20" width="7" height="12" fill="#d2d2d0"/><rect x="31" y="6" width="8" height="22" fill="#efefed"/><path d="M20.5 4 Q25.6 3.6 28.2 7.2 Q30.4 11 29.6 16 Q30.6 21 29.6 25 Q30.4 29 28 31 L24 30.6 L17 30.6 L12.6 31 Q10.2 29 11.2 25 Q10.2 21 11.2 16.5 Q10.4 11 13 7.4 Q15.6 4.2 20.5 4Z" fill="#3a2c25" stroke="#3a2c25" stroke-width="1.6" stroke-dasharray="1.6 1.4" stroke-linecap="round"/><ellipse cx="20.8" cy="18.2" rx="6" ry="8.2" fill="#dab39c"/><path d="M15 13 Q17 8.5 21.5 9 Q25.5 9.5 27 13 Q23 11 19 11.5 Q16.5 12 15 13Z" fill="#2f241f"/><rect x="16.8" y="24" width="8" height="17" fill="#dcb5a0"/><path d="M15 15.6 H27.4" stroke="#3b3634" stroke-width="1.1"/><rect x="15.6" y="15.2" width="4.8" height="3.2" rx="1" fill="none" stroke="#3b3634" stroke-width="0.8"/><rect x="21.8" y="15.2" width="4.8" height="3.2" rx="1" fill="none" stroke="#3b3634" stroke-width="0.8"/><path d="M18.5 21.8 Q21 23.4 23.5 21.8" fill="none" stroke="#a8705a" stroke-width="0.8"/><path d="M1 41 Q4 32 14 30 L19 41Z" fill="#15a894"/><path d="M25 30 Q34 31 38.5 36 L37.5 41 L23 41Z" fill="#18b09a"/><path d="M18.2 36 L20.8 41 L23.2 36Z" fill="#ececec"/></g></svg><div class="a tx" style="left:1253.95px;top:633.98px;font-size:16.5px;line-height:20px;color:#161b26;letter-spacing:0.580px;">Lisa Simpson</div><div class="a tx" style="left:1393.06px;top:633.98px;font-size:16.5px;line-height:20px;color:#161b26;letter-spacing:1.229px;">09/09/2025</div><div class="hl" style="top:669.0px"></div>
<div class="grp" style="top:680.0px;height:49.5px"></div><svg class="a" style="left:86.3px;top:701.1px" width="14" height="10" viewBox="0 0 14 10"><path d="M2.6 2.4 L6.9 6.9 L11.2 2.4" fill="none" stroke="#2a3142" stroke-width="1.4" stroke-linecap="round" stroke-linejoin="round"/></svg><div class="gchip" style="left:116.0px;top:689.5px;width:205.0px"></div><svg class="a" style="left:125.0px;top:697.0px" width="16" height="16" viewBox="0 0 16 16"><path d="M5 3.2 V1.6 Q5 0.6 6 0.6 H10 Q11 0.6 11 1.6 V3.2 H9.7 V1.9 H6.3 V3.2Z" fill="#3d8dd6"/><rect x="0.4" y="3.4" width="15.2" height="11.6" rx="1.2" fill="#3d8dd6"/><rect x="0.4" y="8.4" width="15.2" height="1.1" fill="#e3e8f1"/><rect x="6.4" y="7.4" width="3.2" height="3.2" rx="0.5" fill="#e3e8f1"/><rect x="7.1" y="8.1" width="1.8" height="1.8" fill="#3d8dd6"/></svg><div class="a tx" style="left:148.57px;top:694.30px;font-size:16.5px;line-height:20px;color:#161b26;letter-spacing:0.652px;">Actionable Meetings</div><div class="a tx" style="left:338.14px;top:694.30px;font-size:16.5px;line-height:20px;color:#6b7385;letter-spacing:0.650px;">1</div>
<div class="a" style="left:25.6px;top:744.8px;width:20px;text-align:center;font-size:14.5px;line-height:20px;color:#6b7385">9</div><svg class="a" style="left:72.0px;top:740.0px" width="35" height="30" viewBox="0 0 35 30"><g fill="none" stroke="#1a1f2c" stroke-width="1.6" stroke-linecap="round" stroke-linejoin="round"><path d="M12 8.9 H21.2 Q23.2 8.9 23.2 10.9 V17.5 L18.4 22.1 H12 Q10 22.1 10 20.1 V10.9 Q10 8.9 12 8.9Z M23.2 17.5 H19.4 Q18.3 17.5 18.3 18.6 V22.1" stroke-width="1.7"/></g></svg><div class="a tx" style="left:107.55px;top:745.00px;font-size:16.5px;line-height:20px;color:#161b26;letter-spacing:0.892px;">New Meeting</div><div class="chip" style="left:472.0px;top:740.5px;width:56px"></div><div class="a tx" style="left:481.03px;top:745.00px;font-size:16.5px;line-height:20px;color:#161b26;letter-spacing:-0.236px;">Task</div><div class="chip" style="left:1041.0px;top:740.5px;width:156px"></div><svg class="a" style="left:1050.0px;top:747.0px" width="16" height="16" viewBox="0 0 16 16"><path d="M5 3.2 V1.6 Q5 0.6 6 0.6 H10 Q11 0.6 11 1.6 V3.2 H9.7 V1.9 H6.3 V3.2Z" fill="#3d8dd6"/><rect x="0.4" y="3.4" width="15.2" height="11.6" rx="1.2" fill="#3d8dd6"/><rect x="0.4" y="8.4" width="15.2" height="1.1" fill="#f0f3f7"/><rect x="6.4" y="7.4" width="3.2" height="3.2" rx="0.5" fill="#f0f3f7"/><rect x="7.1" y="8.1" width="1.8" height="1.8" fill="#3d8dd6"/></svg><div class="a tx" style="left:1073.67px;top:745.00px;font-size:16.5px;line-height:20px;color:#161b26;letter-spacing:0.504px;">Actionable ...</div><svg class="a" style="left:1215.1px;top:740.3px" width="29.1" height="29.5" viewBox="0 0 40 40" preserveAspectRatio="none"><defs><clipPath id="cr9"><rect x="0" y="0" width="40" height="40" rx="7"/></clipPath></defs><g clip-path="url(#cr9)"><rect width="40" height="40" fill="#e6e6e4"/><rect x="3" y="1.5" width="24" height="1.4" fill="#8d8d8d" opacity="0.5"/><rect x="1" y="20" width="7" height="12" fill="#d2d2d0"/><rect x="31" y="6" width="8" height="22" fill="#efefed"/><path d="M20.5 4 Q25.6 3.6 28.2 7.2 Q30.4 11 29.6 16 Q30.6 21 29.6 25 Q30.4 29 28 31 L24 30.6 L17 30.6 L12.6 31 Q10.2 29 11.2 25 Q10.2 21 11.2 16.5 Q10.4 11 13 7.4 Q15.6 4.2 20.5 4Z" fill="#3a2c25" stroke="#3a2c25" stroke-width="1.6" stroke-dasharray="1.6 1.4" stroke-linecap="round"/><ellipse cx="20.8" cy="18.2" rx="6" ry="8.2" fill="#dab39c"/><path d="M15 13 Q17 8.5 21.5 9 Q25.5 9.5 27 13 Q23 11 19 11.5 Q16.5 12 15 13Z" fill="#2f241f"/><rect x="16.8" y="24" width="8" height="17" fill="#dcb5a0"/><path d="M15 15.6 H27.4" stroke="#3b3634" stroke-width="1.1"/><rect x="15.6" y="15.2" width="4.8" height="3.2" rx="1" fill="none" stroke="#3b3634" stroke-width="0.8"/><rect x="21.8" y="15.2" width="4.8" height="3.2" rx="1" fill="none" stroke="#3b3634" stroke-width="0.8"/><path d="M18.5 21.8 Q21 23.4 23.5 21.8" fill="none" stroke="#a8705a" stroke-width="0.8"/><path d="M1 41 Q4 32 14 30 L19 41Z" fill="#15a894"/><path d="M25 30 Q34 31 38.5 36 L37.5 41 L23 41Z" fill="#18b09a"/><path d="M18.2 36 L20.8 41 L23.2 36Z" fill="#ececec"/></g></svg><div class="a tx" style="left:1253.95px;top:745.00px;font-size:16.5px;line-height:20px;color:#161b26;letter-spacing:0.580px;">Lisa Simpson</div><div class="a tx" style="left:1392.87px;top:745.00px;font-size:16.5px;line-height:20px;color:#161b26;letter-spacing:1.226px;">29/10/2024</div><div class="hl" style="top:780.0px"></div>
<div class="grp" style="top:790.3px;height:49.5px"></div><svg class="a" style="left:86.3px;top:811.4px" width="14" height="10" viewBox="0 0 14 10"><path d="M2.6 2.4 L6.9 6.9 L11.2 2.4" fill="none" stroke="#2a3142" stroke-width="1.4" stroke-linecap="round" stroke-linejoin="round"/></svg><div class="gchip" style="left:116.0px;top:799.8px;width:205.0px"></div><svg class="a" style="left:125.0px;top:807.3px" width="16" height="16" viewBox="0 0 16 16"><path d="M5 3.2 V1.6 Q5 0.6 6 0.6 H10 Q11 0.6 11 1.6 V3.2 H9.7 V1.9 H6.3 V3.2Z" fill="#3d8dd6"/><rect x="0.4" y="3.4" width="15.2" height="11.6" rx="1.2" fill="#3d8dd6"/><rect x="0.4" y="8.4" width="15.2" height="1.1" fill="#e3e8f1"/><rect x="6.4" y="7.4" width="3.2" height="3.2" rx="0.5" fill="#e3e8f1"/><rect x="7.1" y="8.1" width="1.8" height="1.8" fill="#3d8dd6"/></svg><div class="a tx" style="left:148.57px;top:804.60px;font-size:16.5px;line-height:20px;color:#161b26;letter-spacing:0.652px;">Actionable Meetings</div><div class="a tx" style="left:337.67px;top:804.60px;font-size:16.5px;line-height:20px;color:#6b7385;letter-spacing:0.650px;">2</div>
<div class="a" style="left:25.6px;top:904.8px;width:20px;text-align:center;font-size:14.5px;line-height:20px;color:#6b7385">11</div><div class="a" style="left:81.0px;top:905.3px;width:1.8px;height:2.6px;border-radius:0.8px;background:#1a1f2c;z-index:5"></div><div class="a tx" style="left:108.87px;top:905.00px;font-size:16.5px;line-height:20px;color:#161b26;letter-spacing:0.249px;">Agenda</div><div class="chip" style="left:472.0px;top:900.5px;width:56px"></div><div class="a tx" style="left:481.03px;top:905.00px;font-size:16.5px;line-height:20px;color:#161b26;letter-spacing:-0.236px;">Task</div><div class="chip" style="left:1041.0px;top:900.5px;width:156px"></div><svg class="a" style="left:1050.0px;top:907.0px" width="16" height="16" viewBox="0 0 16 16"><path d="M5 3.2 V1.6 Q5 0.6 6 0.6 H10 Q11 0.6 11 1.6 V3.2 H9.7 V1.9 H6.3 V3.2Z" fill="#3d8dd6"/><rect x="0.4" y="3.4" width="15.2" height="11.6" rx="1.2" fill="#3d8dd6"/><rect x="0.4" y="8.4" width="15.2" height="1.1" fill="#f0f3f7"/><rect x="6.4" y="7.4" width="3.2" height="3.2" rx="0.5" fill="#f0f3f7"/><rect x="7.1" y="8.1" width="1.8" height="1.8" fill="#3d8dd6"/></svg><div class="a tx" style="left:1073.67px;top:905.00px;font-size:16.5px;line-height:20px;color:#161b26;letter-spacing:0.504px;">Actionable ...</div><svg class="a" style="left:1215.1px;top:900.3px" width="29.1" height="29.5" viewBox="0 0 40 40" preserveAspectRatio="none"><defs><clipPath id="cr11"><rect x="0" y="0" width="40" height="40" rx="7"/></clipPath></defs><g clip-path="url(#cr11)"><rect width="40" height="40" fill="#e6e6e4"/><rect x="3" y="1.5" width="24" height="1.4" fill="#8d8d8d" opacity="0.5"/><rect x="1" y="20" width="7" height="12" fill="#d2d2d0"/><rect x="31" y="6" width="8" height="22" fill="#efefed"/><path d="M20.5 4 Q25.6 3.6 28.2 7.2 Q30.4 11 29.6 16 Q30.6 21 29.6 25 Q30.4 29 28 31 L24 30.6 L17 30.6 L12.6 31 Q10.2 29 11.2 25 Q10.2 21 11.2 16.5 Q10.4 11 13 7.4 Q15.6 4.2 20.5 4Z" fill="#3a2c25" stroke="#3a2c25" stroke-width="1.6" stroke-dasharray="1.6 1.4" stroke-linecap="round"/><ellipse cx="20.8" cy="18.2" rx="6" ry="8.2" fill="#dab39c"/><path d="M15 13 Q17 8.5 21.5 9 Q25.5 9.5 27 13 Q23 11 19 11.5 Q16.5 12 15 13Z" fill="#2f241f"/><rect x="16.8" y="24" width="8" height="17" fill="#dcb5a0"/><path d="M15 15.6 H27.4" stroke="#3b3634" stroke-width="1.1"/><rect x="15.6" y="15.2" width="4.8" height="3.2" rx="1" fill="none" stroke="#3b3634" stroke-width="0.8"/><rect x="21.8" y="15.2" width="4.8" height="3.2" rx="1" fill="none" stroke="#3b3634" stroke-width="0.8"/><path d="M18.5 21.8 Q21 23.4 23.5 21.8" fill="none" stroke="#a8705a" stroke-width="0.8"/><path d="M1 41 Q4 32 14 30 L19 41Z" fill="#15a894"/><path d="M25 30 Q34 31 38.5 36 L37.5 41 L23 41Z" fill="#18b09a"/><path d="M18.2 36 L20.8 41 L23.2 36Z" fill="#ececec"/></g></svg><div class="a tx" style="left:1253.95px;top:905.00px;font-size:16.5px;line-height:20px;color:#161b26;letter-spacing:0.580px;">Lisa Simpson</div><div class="a tx" style="left:1392.44px;top:905.00px;font-size:16.5px;line-height:20px;color:#161b26;letter-spacing:1.297px;">10/03/2025</div><div class="hl" style="top:940.0px"></div>
<div class="a" style="left:0;top:840.0px;width:1487px;height:50px;background:#f0f3f8;border-top:1px solid #dde2ea;border-bottom:1px solid #e3e7ee"></div><div class="a" style="left:638.0px;top:840.0px;width:392px;height:50px;border:1px solid #dde2ea;border-bottom-width:2px"></div><div class="a" style="left:26.19999999999999px;top:854.9px;width:19.5px;height:19.5px;border:2px solid #6b7487;border-radius:5px;background:#e7ebf1"></div><svg class="a" style="left:72.0px;top:850.0px" width="35" height="30" viewBox="0 0 35 30"><g fill="none" stroke="#1a1f2c" stroke-width="1.6" stroke-linecap="round" stroke-linejoin="round"><path d="M12 8.9 H21.2 Q23.2 8.9 23.2 10.9 V17.5 L18.4 22.1 H12 Q10 22.1 10 20.1 V10.9 Q10 8.9 12 8.9Z M23.2 17.5 H19.4 Q18.3 17.5 18.3 18.6 V22.1" stroke-width="1.7"/></g></svg><div class="a tx" style="left:107.55px;top:855.00px;font-size:16.5px;line-height:20px;color:#161b26;letter-spacing:0.643px;">Planning</div><div class="chip" style="left:472.0px;top:850.5px;width:56px;background:#e4e9f1"></div><div class="a tx" style="left:481.03px;top:855.00px;font-size:16.5px;line-height:20px;color:#161b26;letter-spacing:-0.236px;">Task</div><div class="chip" style="left:1041.0px;top:850.5px;width:156px;background:#e4e9f1"></div><svg class="a" style="left:1050.0px;top:857.0px" width="16" height="16" viewBox="0 0 16 16"><path d="M5 3.2 V1.6 Q5 0.6 6 0.6 H10 Q11 0.6 11 1.6 V3.2 H9.7 V1.9 H6.3 V3.2Z" fill="#3d8dd6"/><rect x="0.4" y="3.4" width="15.2" height="11.6" rx="1.2" fill="#3d8dd6"/><rect x="0.4" y="8.4" width="15.2" height="1.1" fill="#e4e9f1"/><rect x="6.4" y="7.4" width="3.2" height="3.2" rx="0.5" fill="#e4e9f1"/><rect x="7.1" y="8.1" width="1.8" height="1.8" fill="#3d8dd6"/></svg><div class="a tx" style="left:1073.67px;top:855.00px;font-size:16.5px;line-height:20px;color:#161b26;letter-spacing:0.504px;">Actionable ...</div><svg class="a" style="left:1215.1px;top:850.3px" width="29.1" height="29.5" viewBox="0 0 40 40" preserveAspectRatio="none"><defs><clipPath id="cr10"><rect x="0" y="0" width="40" height="40" rx="7"/></clipPath></defs><g clip-path="url(#cr10)"><rect width="40" height="40" fill="#e6e6e4"/><rect x="3" y="1.5" width="24" height="1.4" fill="#8d8d8d" opacity="0.5"/><rect x="1" y="20" width="7" height="12" fill="#d2d2d0"/><rect x="31" y="6" width="8" height="22" fill="#efefed"/><path d="M20.5 4 Q25.6 3.6 28.2 7.2 Q30.4 11 29.6 16 Q30.6 21 29.6 25 Q30.4 29 28 31 L24 30.6 L17 30.6 L12.6 31 Q10.2 29 11.2 25 Q10.2 21 11.2 16.5 Q10.4 11 13 7.4 Q15.6 4.2 20.5 4Z" fill="#3a2c25" stroke="#3a2c25" stroke-width="1.6" stroke-dasharray="1.6 1.4" stroke-linecap="round"/><ellipse cx="20.8" cy="18.2" rx="6" ry="8.2" fill="#dab39c"/><path d="M15 13 Q17 8.5 21.5 9 Q25.5 9.5 27 13 Q23 11 19 11.5 Q16.5 12 15 13Z" fill="#2f241f"/><rect x="16.8" y="24" width="8" height="17" fill="#dcb5a0"/><path d="M15 15.6 H27.4" stroke="#3b3634" stroke-width="1.1"/><rect x="15.6" y="15.2" width="4.8" height="3.2" rx="1" fill="none" stroke="#3b3634" stroke-width="0.8"/><rect x="21.8" y="15.2" width="4.8" height="3.2" rx="1" fill="none" stroke="#3b3634" stroke-width="0.8"/><path d="M18.5 21.8 Q21 23.4 23.5 21.8" fill="none" stroke="#a8705a" stroke-width="0.8"/><path d="M1 41 Q4 32 14 30 L19 41Z" fill="#15a894"/><path d="M25 30 Q34 31 38.5 36 L37.5 41 L23 41Z" fill="#18b09a"/><path d="M18.2 36 L20.8 41 L23.2 36Z" fill="#ececec"/></g></svg><div class="a tx" style="left:1253.95px;top:855.00px;font-size:16.5px;line-height:20px;color:#161b26;letter-spacing:0.580px;">Lisa Simpson</div><div class="a tx" style="left:1392.44px;top:855.00px;font-size:16.5px;line-height:20px;color:#161b26;letter-spacing:1.297px;">10/03/2025</div>
<div class="a" style="left:0;top:902.0px;width:1487px;height:6px;background:linear-gradient(rgba(236,239,244,0),rgba(232,235,241,0.9))"></div>
<div class="a" style="left:0;top:908.0px;width:1487px;height:60px;background:#fff;border-top:1px solid #e3e7ee"></div>
<svg class="a" style="left:77px;top:918px" width="200" height="30" viewBox="390 985 200 30"><path d="M404.6 994.6 V1007.6 M398.1 1001.1 H411.1" stroke="#1a1f2c" stroke-width="1.5" stroke-linecap="round"/><path d="M516 1001.2 L521 996 L526 1001.2" fill="none" stroke="#6b7385" stroke-width="1.4" stroke-linecap="round" stroke-linejoin="round"/><path d="M537 995.6 L543 1001.6 H539.8 V1006.2 H534.2 V1001.6 H531 Z" fill="none" stroke="#6b7385" stroke-width="1.3" stroke-linejoin="round"/></svg>
<div class="a tx" style="left:111.18px;top:923.80px;font-size:16.5px;line-height:20px;color:#161b26;letter-spacing:0.912px;">Item type</div>
<div class="a tx" style="left:232.15px;top:923.80px;font-size:16.5px;line-height:20px;color:#6b7385;letter-spacing:0.650px;">N</div>
<svg class="a" style="left:804px;top:869px" width="16" height="22" viewBox="0 0 16 22"><path d="M3 3 L3 14.8 L6 12.2 L8.4 18.4 Q8.8 19.2 9.6 18.9 L10.6 18.5 Q11.3 18.1 11 17.4 L8.6 11.8 L12.4 11.7 Z" fill="#000" stroke="#fff" stroke-width="1.1" stroke-linejoin="round"/></svg>
</div>
<div class="a" style="left:0;top:0;width:1800px;height:1.5px;background:repeating-linear-gradient(90deg,rgba(195,196,200,0.8) 0 4.8px,rgba(0,0,0,0.6) 4.8px 9.793px);background-position:0.28px 0"></div>
<div class="a" style="left:0;top:1023.4px;width:1800px;height:1.6px;background:repeating-linear-gradient(90deg,rgba(195,196,200,0.8) 0 4.8px,rgba(0,0,0,0.6) 4.8px 9.793px);background-position:0.28px 0"></div>
<div class="a" style="left:0;top:0;width:1.5px;height:1025px;background:repeating-linear-gradient(180deg,rgba(195,196,200,0.8) 0 4.8px,rgba(0,0,0,0.6) 4.8px 9.793px);background-position:0 -0.3px"></div>
<div class="a" style="left:1798.5px;top:0;width:1.5px;height:1025px;background:repeating-linear-gradient(180deg,rgba(195,196,200,0.8) 0 4.8px,rgba(0,0,0,0.6) 4.8px 9.793px);background-position:0 -0.3px"></div>
<svg class="a" style="left:0;top:0" width="1800" height="1025" viewBox="0 0 1800 1025"><circle cx="0" cy="0" r="4.6" fill="#a0a0a2" stroke="#e6e6e8" stroke-width="1.3"/><circle cx="900" cy="0" r="4.6" fill="#a0a0a2" stroke="#e6e6e8" stroke-width="1.3"/><circle cx="1800" cy="0" r="4.6" fill="#a0a0a2" stroke="#e6e6e8" stroke-width="1.3"/><circle cx="0" cy="512.5" r="4.6" fill="#a0a0a2" stroke="#e6e6e8" stroke-width="1.3"/><circle cx="1800" cy="512.5" r="4.6" fill="#a0a0a2" stroke="#e6e6e8" stroke-width="1.3"/><circle cx="0" cy="1025" r="4.6" fill="#a0a0a2" stroke="#e6e6e8" stroke-width="1.3"/><circle cx="900" cy="1025" r="4.6" fill="#a0a0a2" stroke="#e6e6e8" stroke-width="1.3"/><circle cx="1800" cy="1025" r="4.6" fill="#a0a0a2" stroke="#e6e6e8" stroke-width="1.3"/></svg>
</body></html>
